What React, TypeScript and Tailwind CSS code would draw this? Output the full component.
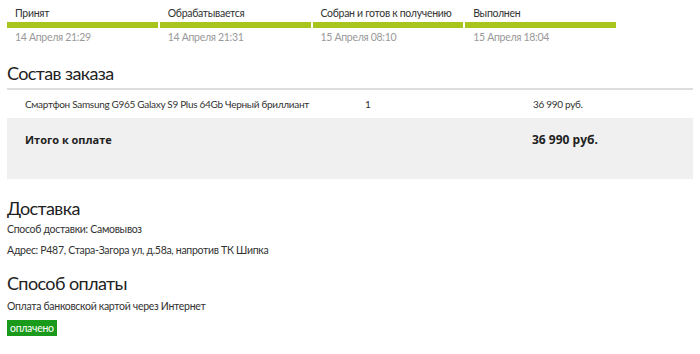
const steps = [
  { title: "Принят", date: "14 Апреля 21:29" },
  { title: "Обрабатывается", date: "14 Апреля 21:31" },
  { title: "Собран и готов к получению", date: "15 Апреля 08:10" },
  { title: "Выполнен", date: "15 Апреля 18:04" },
];

export default function App() {
  return (
    <div className="min-h-[354px] bg-white px-[7px] pt-[6px] font-['Lato',sans-serif] tracking-[-0.3px] text-[#333]">
      {/* order status track */}
      <div className="flex w-[609px] gap-[2px]">
        {steps.map((s) => (
          <div key={s.title} className="flex-1">
            <div className="whitespace-nowrap pl-2 text-[10.5px] leading-[15px] text-[#333]">{s.title}</div>
            <div className="mt-[1px] h-[6px] bg-[#a7c51c]" />
            <div className="mt-[2px] whitespace-nowrap pl-2 text-[10.5px] leading-[15px] text-[#999]">{s.date}</div>
          </div>
        ))}
      </div>

      <h2 className="mt-[16px] text-[18px] leading-[24px] tracking-[-0.6px] text-[#222]">Состав заказа</h2>
      <div className="mt-[3px] h-[2px] bg-[#ddd]" />

      <div className="flex h-[28px] items-center whitespace-nowrap text-[10px] text-[#333]">
        <div className="w-[358px] pl-[18px]">Смартфон Samsung G965 Galaxy S9 Plus 64Gb Черный бриллиант</div>
        <div className="w-[168px]">1</div>
        <div>36 990 руб.</div>
      </div>
      <div className="flex h-[61px] items-start bg-[#f0f0f0] pt-[12px] font-['Open_Sans',sans-serif] font-bold tracking-normal text-[#222]">
        <div className="w-[525px] pl-[18px] text-[11px] leading-[20px]">Итого к оплате</div>
        <div className="text-[12px] leading-[20px]">36 990 руб.</div>
      </div>

      <h2 className="mt-[18px] text-[18px] leading-[22px] tracking-[-0.6px] text-[#222]">Доставка</h2>
      <p className="mt-[3px] text-[10.5px] leading-[14px]">Способ доставки: Самовывоз</p>
      <p className="mt-[7px] text-[10.5px] leading-[14px]">Адрес: Р487, Стара-Загора ул, д.58а, напротив ТК Шипка</p>

      <h2 className="mt-[15px] text-[18px] leading-[22px] tracking-[-0.6px] text-[#222]">Способ оплаты</h2>
      <p className="mt-[5px] text-[10.5px] leading-[14px]">Оплата банковской картой через Интернет</p>
      <span className="mt-[7px] inline-block bg-[#1a9a1a] px-[3px] text-[10.5px] leading-[16px] text-white">оплачено</span>
    </div>
  );
}
